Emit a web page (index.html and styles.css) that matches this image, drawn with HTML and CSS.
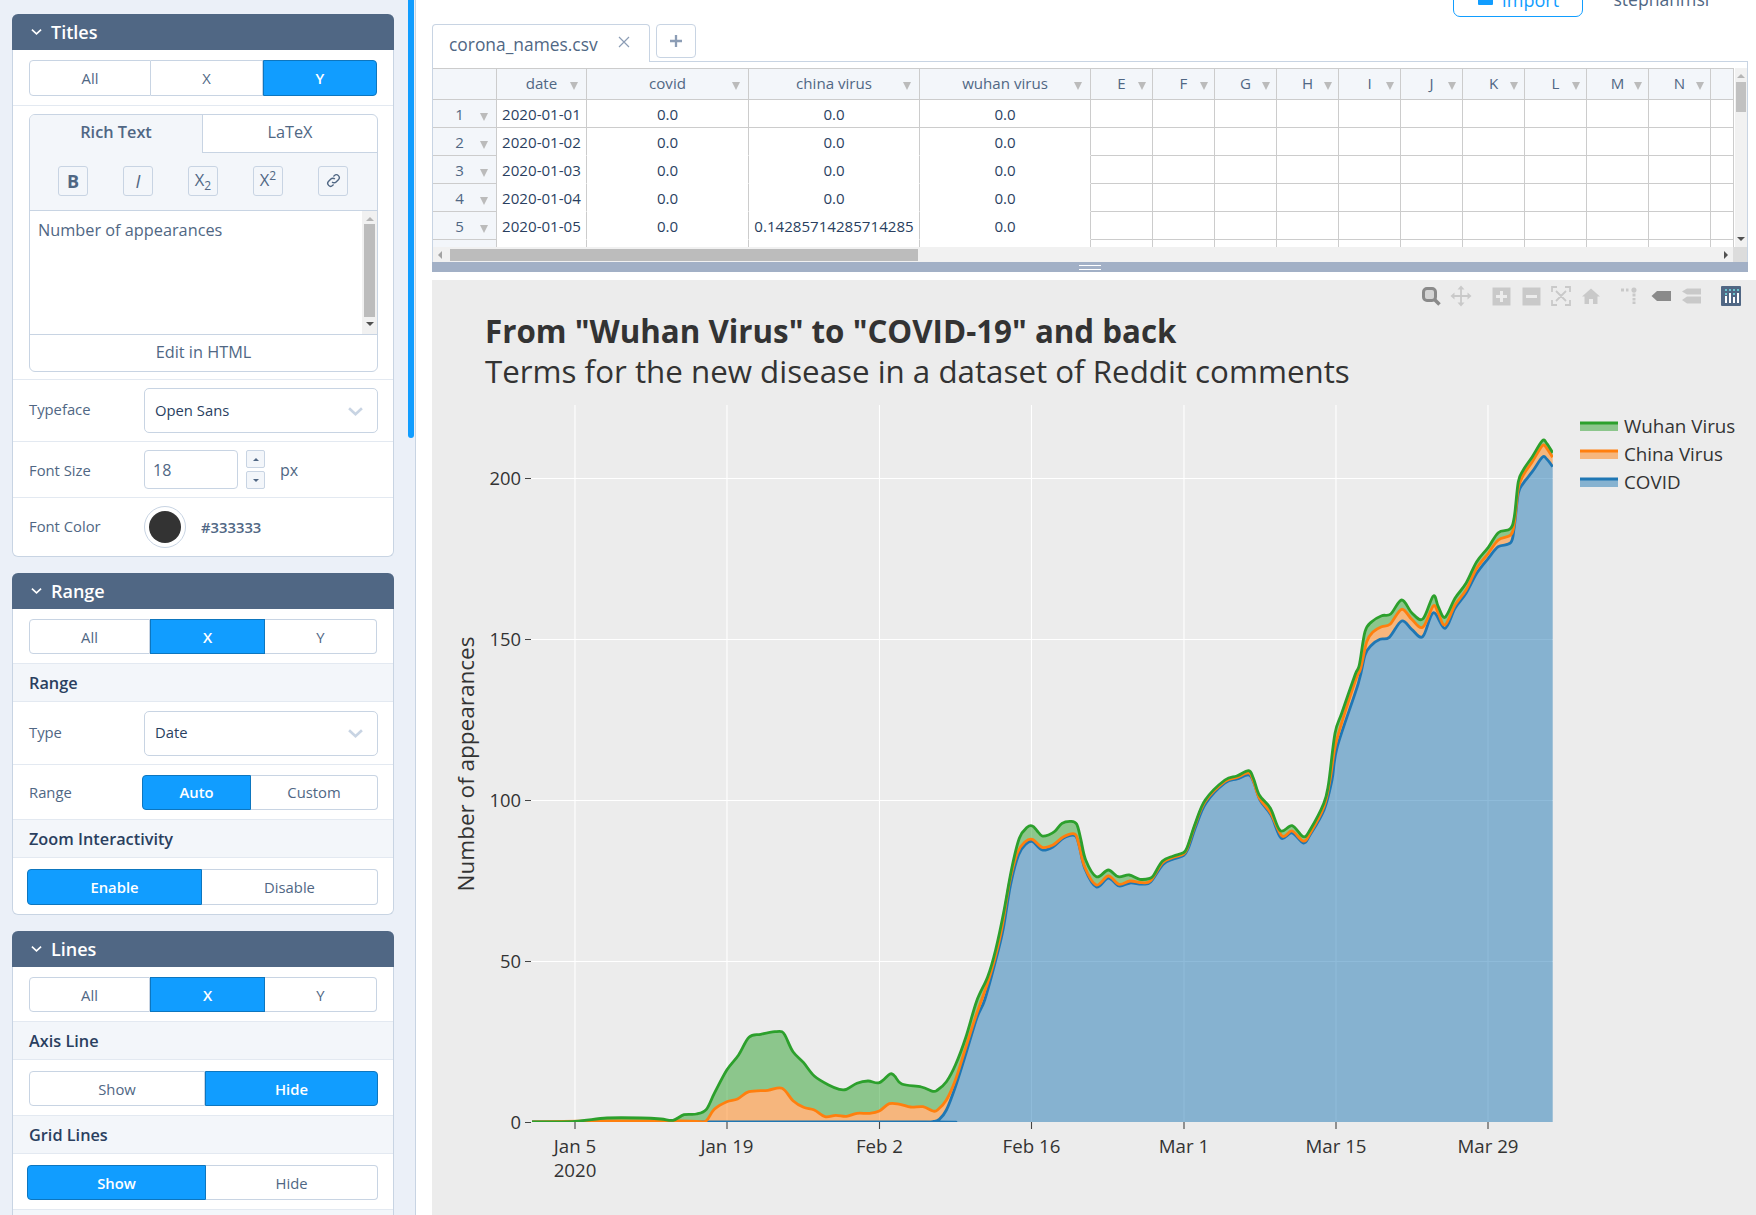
FILE: index.html
```html
<!DOCTYPE html>
<html>
<head>
<meta charset="UTF-8">
<title>Chart Studio</title>
<link rel="stylesheet" href="styles.css">
</head>
<body>
<aside class="sidebar">
  <div class="panels">

    <section class="panel">
      <h2 class="panel-head"><svg class="chev" viewBox="0 0 12 8"><path d="M1 1.5l5 4.500 5-4.500"/></svg>Titles</h2>
      <div class="row row-seg">
        <div class="seg seg-titles">
          <button>All</button><button>X</button><button class="on">Y</button>
        </div>
      </div>
      <div class="row row-editor">
        <div class="editor">
          <div class="ed-tabs">
            <div class="ed-tab ed-tab-on">Rich Text</div>
            <div class="ed-tab">LaTeX</div>
          </div>
          <div class="ed-tools">
            <span class="tool tool-b">B</span>
            <span class="tool tool-i">I</span>
            <span class="tool"><span>X<sub>2</sub></span></span>
            <span class="tool"><span>X<sup>2</sup></span></span>
            <span class="tool"><svg class="link-icon" viewBox="0 0 16 16"><path d="M6.500 9.500a3 3 0 0 0 4.300 0l2.400-2.400a3 3 0 0 0-4.300-4.300l-1 1"/><path d="M9.500 6.500a3 3 0 0 0-4.300 0l-2.400 2.400a3 3 0 0 0 4.300 4.300l1-1"/></svg></span>
          </div>
          <div class="ed-body">
            <div class="ed-text">Number of appearances</div>
            <div class="ed-scroll">
              <i class="arrow-up"></i>
              <div class="ed-thumb"></div>
              <i class="arrow-down"></i>
            </div>
          </div>
          <div class="ed-foot">Edit in HTML</div>
        </div>
      </div>
      <div class="row row-field row-type">
        <label>Typeface</label>
        <div class="select">Open Sans<svg class="sel-chev" viewBox="0 0 14 8"><path d="M1 1l6 5.500 6-5.500"/></svg></div>
      </div>
      <div class="row row-field row-size">
        <label>Font Size</label>
        <div class="num">18</div>
        <div class="spin">
          <span><i class="mini-up"></i></span>
          <span><i class="mini-down"></i></span>
        </div>
        <span class="unit">px</span>
      </div>
      <div class="row row-field row-color">
        <label>Font Color</label>
        <div class="swatch"><span></span></div>
        <span class="hex">#333333</span>
      </div>
    </section>

    <section class="panel">
      <h2 class="panel-head"><svg class="chev" viewBox="0 0 12 8"><path d="M1 1.5l5 4.500 5-4.500"/></svg>Range</h2>
      <div class="row row-seg">
        <div class="seg seg-axis">
          <button>All</button><button class="on">X</button><button>Y</button>
        </div>
      </div>
      <div class="subhead">Range</div>
      <div class="row row-field row-type2">
        <label>Type</label>
        <div class="select">Date<svg class="sel-chev" viewBox="0 0 14 8"><path d="M1 1l6 5.500 6-5.500"/></svg></div>
      </div>
      <div class="row row-field row-range">
        <label>Range</label>
        <div class="seg seg-range">
          <button class="on">Auto</button><button>Custom</button>
        </div>
      </div>
      <div class="subhead">Zoom Interactivity</div>
      <div class="row row-wide row-last">
        <div class="seg seg-zoom">
          <button class="on">Enable</button><button>Disable</button>
        </div>
      </div>
    </section>

    <section class="panel">
      <h2 class="panel-head"><svg class="chev" viewBox="0 0 12 8"><path d="M1 1.5l5 4.500 5-4.500"/></svg>Lines</h2>
      <div class="row row-seg">
        <div class="seg seg-axis">
          <button>All</button><button class="on">X</button><button>Y</button>
        </div>
      </div>
      <div class="subhead">Axis Line</div>
      <div class="row row-wide">
        <div class="seg seg-axisline">
          <button>Show</button><button class="on">Hide</button>
        </div>
      </div>
      <div class="subhead">Grid Lines</div>
      <div class="row row-wide">
        <div class="seg seg-grid">
          <button class="on">Show</button><button>Hide</button>
        </div>
      </div>
      <div class="subhead"></div>
    </section>
  </div>
  <div class="side-thumb"></div>
</aside>

<main class="main">
  <div class="topbar">
    <button class="import"><svg class="import-icon" viewBox="0 0 15 14"><rect width="15" height="14" rx="1"/></svg>Import</button>
    <span class="user">stephanmsr</span>
  </div>

  <div class="file-tabs">
    <div class="file-tab">corona_names.csv<svg class="tab-x" viewBox="0 0 12 12"><path d="M1 1l10 10M11 1L1 11"/></svg></div>
    <div class="file-add"><svg viewBox="0 0 14 14"><path d="M7 1v12M1 7h12"/></svg></div>
  </div>

  <div class="sheet">
    <div class="sheet-top">
      <div class="grid-view">
        <table class="grid">
          <thead>
            <tr>
              <th class="corner"></th><th>date</th><th>covid</th><th>china virus</th><th>wuhan virus</th>
              <th>E</th><th>F</th><th>G</th><th>H</th><th>I</th><th>J</th><th>K</th><th>L</th><th>M</th><th>N</th><th class="corner"></th>
            </tr>
          </thead>
          <tbody>
            <tr><th>1</th><td class="val">2020-01-01</td><td class="val">0.0</td><td class="val">0.0</td><td class="val">0.0</td><td></td><td></td><td></td><td></td><td></td><td></td><td></td><td></td><td></td><td></td><td></td></tr>
            <tr><th>2</th><td class="val">2020-01-02</td><td class="val">0.0</td><td class="val">0.0</td><td class="val">0.0</td><td></td><td></td><td></td><td></td><td></td><td></td><td></td><td></td><td></td><td></td><td></td></tr>
            <tr><th>3</th><td class="val">2020-01-03</td><td class="val">0.0</td><td class="val">0.0</td><td class="val">0.0</td><td></td><td></td><td></td><td></td><td></td><td></td><td></td><td></td><td></td><td></td><td></td></tr>
            <tr><th>4</th><td class="val">2020-01-04</td><td class="val">0.0</td><td class="val">0.0</td><td class="val">0.0</td><td></td><td></td><td></td><td></td><td></td><td></td><td></td><td></td><td></td><td></td><td></td></tr>
            <tr><th>5</th><td class="val">2020-01-05</td><td class="val">0.0</td><td class="val">0.14285714285714285</td><td class="val">0.0</td><td></td><td></td><td></td><td></td><td></td><td></td><td></td><td></td><td></td><td></td><td></td></tr>
            <tr class="cut"><th></th><td class="val"></td><td class="val"></td><td class="val"></td><td class="val"></td><td></td><td></td><td></td><td></td><td></td><td></td><td></td><td></td><td></td><td></td><td></td></tr>
          </tbody>
        </table>
      </div>
      <div class="vscroll">
        <i class="arrow-up"></i>
        <div class="vthumb"></div>
        <i class="arrow-down"></i>
      </div>
    </div>
    <div class="hscroll">
      <i class="arrow-left"></i>
      <div class="hthumb"></div>
      <i class="arrow-right"></i>
      <div class="sc-corner"></div>
    </div>
    <div class="handle"><span></span></div>
  </div>

  <div class="plot">
    <svg class="plot-svg" viewBox="432 280 1324 935">
      <defs>
        <clipPath id="plot-clip"><rect x="531" y="405" width="1022" height="717"/></clipPath>
      </defs>
      <!-- grid -->
      <g class="gridlines">
        <path d="M575 405V1122M727 405V1122M879.500 405V1122M1031.500 405V1122M1184 405V1122M1336 405V1122M1488 405V1122"/>
        <path d="M531 961.500H1553M531 800.500H1553M531 639.500H1553M531 478.500H1553"/>
      </g>
      <g class="ticks">
        <path d="M525 1122.500H531M525 961.500H531M525 800.500H531M525 639.500H531M525 478.500H531"/>
        <path d="M575 1122V1129M727 1122V1129M879.500 1122V1129M1031.500 1122V1129M1184 1122V1129M1336 1122V1129M1488 1122V1129"/>
      </g>
      <!-- traces, chart.js fills in the d -->
      <g clip-path="url(#plot-clip)">
        <path id="fill-blue" class="fill-blue"/>
        <path id="fill-orange" class="fill-orange"/>
        <path id="fill-green" class="fill-green"/>
        <path id="line-blue" class="line line-blue"/>
        <path id="line-orange" class="line line-orange"/>
        <path id="line-green" class="line line-green"/>
      </g>

      <text class="plot-title" x="485" y="343">From "Wuhan Virus" to "COVID-19" and back</text>
      <text class="plot-sub" x="485" y="383">Terms for the new disease in a dataset of Reddit comments</text>
      <text class="y-title" transform="rotate(-90 474 764)" x="474" y="764">Number of appearances</text>

      <g class="y-labels">
        <text x="521" y="1128.500">0</text>
        <text x="521" y="967.500">50</text>
        <text x="521" y="806.500">100</text>
        <text x="521" y="645.500">150</text>
        <text x="521" y="484.500">200</text>
      </g>
      <g class="x-labels">
        <text x="575" y="1153">Jan 5</text>
        <text x="575" y="1177">2020</text>
        <text x="727" y="1153">Jan 19</text>
        <text x="879.500" y="1153">Feb 2</text>
        <text x="1031.500" y="1153">Feb 16</text>
        <text x="1184" y="1153">Mar 1</text>
        <text x="1336" y="1153">Mar 15</text>
        <text x="1488" y="1153">Mar 29</text>
      </g>

      <g class="legend">
        <rect class="fill-green" x="1580" y="423" width="38" height="8"/>
        <path class="line line-green" d="M1580 423H1618"/>
        <text x="1624" y="433">Wuhan Virus</text>
        <rect class="fill-orange" x="1580" y="451" width="38" height="8"/>
        <path class="line line-orange" d="M1580 451H1618"/>
        <text x="1624" y="461">China Virus</text>
        <rect class="fill-blue" x="1580" y="479" width="38" height="8"/>
        <path class="line line-blue" d="M1580 479H1618"/>
        <text x="1624" y="489">COVID</text>
      </g>

      <!-- modebar -->
      <g class="mb-dark">
        <rect class="mb-ring" x="1423.500" y="288.500" width="12" height="12" rx="3.500"/>
        <path class="mb-stroke" d="M1434.500 299.500l5 5"/>
      </g>
      <g class="mb-light">
        <path class="mb-stroke-thin" d="M1461 288V304M1453 296H1469"/>
        <path d="M1461 285.500l3.500 4h-7zM1461 306.500l3.500-4h-7zM1450.500 296l4-3.500v7zM1471.500 296l-4-3.500v7z"/>
        <path fill-rule="evenodd" d="M1492.500 287.500h18v18h-18zM1500 291v4h-4v3h4v4h3v-4h4v-3h-4v-4z"/>
        <path fill-rule="evenodd" d="M1522.500 287.500h18v18h-18zM1526 295v3h11v-3z"/>
        <path class="mb-stroke-thin" d="M1557 287H1552V292M1565 287H1570V292M1557 305H1552V300M1565 305H1570V300M1556 291L1566 301M1566 291L1556 301"/>
        <path d="M1591 288.500l9 8h-2.500v7.500h-4.500v-5h-4v5h-4.500v-7.500h-2.500z"/>
        <path d="M1621 288.500h3v3h-3zM1626 288.500h2.500v3h-2.500zM1634 287.500a2.600 2.600 0 1 1-.1 0zM1632.500 293.500h3v3h-3zM1632.500 298h3v2.500h-3zM1632.500 301.500h3v2.500h-3z"/>
        <path d="M1687 288.500h14v6h-14l-5-3zM1687 296.500h14v7h-14l-5-3.500z"/>
      </g>
      <path class="mb-tag" d="M1657 291h14v10h-14l-5.500-5z"/>
      <rect class="logo-bg" x="1721" y="286" width="20" height="20" rx="1"/>
      <g class="logo-bars">
        <path d="M1725 296h2v7h-2zM1729 293h2v10h-2zM1733 297h2v6h-2zM1737 293h2v10h-2z"/>
      </g>
      <g class="logo-dots">
        <path d="M1725 289h2v2h-2zM1729 289h2v2h-2zM1733 289h2v2h-2zM1737 289h2v2h-2zM1733 293h2v2h-2zM1725 293h2v2h-2z"/>
      </g>
    </svg>
  </div>
</main>
<script src="chart.js"></script>
</body>
</html>
```

FILE: styles.css
```css
* {
  box-sizing: border-box;
}

html, body {
  margin: 0;
  height: 1215px;
  overflow: hidden;
}

body {
  display: flex;
  font-family: "Open Sans", sans-serif;
  font-size: 14.800px;
  color: #506784;
  background: #fff;
}

/* ---- left side ---- */
.sidebar {
  width: 416px;
  height: 1215px;
  flex: none;
  display: flex;
  align-items: flex-start;
  background: #ebf0f8;
  border-right: 1px solid #c8d4e3;
  padding: 14px 0 0 12px;
  overflow: hidden;
}

.panels {
  width: 382px;
  margin-right: 14px;
  flex: none;
}

.side-thumb {
  width: 6px;
  height: 438px;
  margin-top: -14px;
  background: #119dff;
  border-radius: 0 0 3px 3px;
}

.panel {
  background: #fff;
  border: 1px solid #c8d4e3;
  border-top: 0;
  border-radius: 6px;
  margin-bottom: 16px;
}

.panel-head {
  margin: 0 -1px;
  height: 36px;
  display: flex;
  align-items: center;
  background: #506784;
  color: #fff;
  font-size: 18px;
  font-weight: 600;
  border-radius: 6px 6px 0 0;
}

.chev {
  width: 11px;
  height: 8px;
  margin: 0 9px 0 19px;
  fill: none;
  stroke: #fff;
  stroke-width: 1.800;
}

.row {
  border-bottom: 1px solid #e3e9f1;
  padding: 0 15px 0 16px;
}

.row-seg {
  height: 55px;
  padding-top: 10px;
}

.panel:first-child .row-seg {
  height: 56px;
}

.seg {
  display: grid;
  height: 35px;
}

.seg button {
  font: inherit;
  color: #506784;
  background: #fff;
  border: 1px solid #c8d4e3;
  border-left: 0;
  padding: 0;
}

.seg button:first-child {
  border-left: 1px solid #c8d4e3;
  border-radius: 4px 0 0 4px;
}

.seg button:last-child {
  border-radius: 0 4px 4px 0;
}

.seg button.on {
  background: #119dff;
  border: 1px solid #0d76bf;
  color: #fff;
  font-weight: 600;
}

.seg-titles {
  grid-template-columns: 122px 112px 114px;
  height: 36px;
}

.seg-axis {
  grid-template-columns: 121px 115px 112px;
}

.seg-range {
  grid-template-columns: 109px 127px;
}

.seg-zoom {
  grid-template-columns: 175px 176px;
  margin-left: -2px;
  height: 36px;
}

.seg-axisline {
  grid-template-columns: 176px 173px;
}

.seg-grid {
  grid-template-columns: 179px 172px;
  margin-left: -2px;
}

.row-editor {
  height: 274px;
  padding-top: 8px;
}

.editor {
  height: 258px;
  border: 1px solid #c8d4e3;
  border-radius: 6px;
  overflow: hidden;
  display: flex;
  flex-direction: column;
}

.ed-tabs {
  display: flex;
  height: 38px;
  flex: none;
}

.ed-tab {
  flex: 1;
  display: flex;
  align-items: center;
  justify-content: center;
  padding-bottom: 3px;
  border-bottom: 1px solid #c8d4e3;
  font-size: 16.300px;
}

.ed-tab-on {
  flex: 0 0 173px;
  padding-bottom: 5px;
  background: #f3f6fa;
  border-bottom: 0;
  border-right: 1px solid #c8d4e3;
  font-weight: 600;
}

.ed-tools {
  height: 58px;
  flex: none;
  display: flex;
  align-items: center;
  gap: 35px;
  padding: 0 0 2px 28px;
  background: #f3f6fa;
  border-bottom: 1px solid #c8d4e3;
}

.tool {
  width: 30px;
  height: 30px;
  display: flex;
  align-items: center;
  justify-content: center;
  border: 1px solid #c8d4e3;
  border-radius: 3px;
  font-size: 16.500px;
  line-height: 1;
}

.tool sub, .tool sup {
  font-size: 12px;
  line-height: 0;
}

.tool-b {
  font-weight: 700;
  font-size: 18px;
}

.tool-i {
  font-style: italic;
  font-size: 18px;
}

.link-icon {
  width: 15px;
  height: 15px;
  fill: none;
  stroke: #506784;
  stroke-width: 1.500;
}

.ed-body {
  height: 124px;
  flex: none;
  display: flex;
  border-bottom: 1px solid #c8d4e3;
}

.ed-text {
  flex: 1;
  padding: 9px 8px;
  font-size: 16.300px;
  line-height: 21px;
}

.ed-scroll {
  width: 15px;
  background: #f1f1f1;
  display: flex;
  flex-direction: column;
  align-items: center;
}

.ed-scroll .arrow-up {
  margin: 6px 0 3px;
}

.ed-thumb {
  width: 11px;
  height: 93px;
  background: #bcbcbc;
}

.ed-scroll .arrow-down {
  margin-top: 5px;
}

.ed-foot {
  flex: 1;
  display: flex;
  align-items: center;
  justify-content: center;
  padding-bottom: 2px;
  font-size: 16.300px;
}

.arrow-up, .arrow-down, .arrow-left, .arrow-right {
  display: block;
  width: 0;
  height: 0;
  flex: none;
  border-style: solid;
  border-color: transparent;
}

.arrow-up {
  border-width: 0 4px 4px;
  border-bottom-color: #b5b5b5;
}

.arrow-down {
  border-width: 4px 4px 0;
  border-top-color: #505050;
}

.arrow-left {
  border-width: 4px 4px 4px 0;
  border-right-color: #a3a3a3;
}

.arrow-right {
  border-width: 4px 0 4px 4px;
  border-left-color: #505050;
}

.row-field {
  display: flex;
  align-items: center;
}

.row-field label {
  width: 115px;
  flex: none;
}

.row-type {
  height: 62px;
}

.row-type2 {
  height: 63px;
}

.row-type label, .row-type2 label {
  margin-top: -3px;
}

.select {
  width: 234px;
  height: 45px;
  display: flex;
  align-items: center;
  justify-content: space-between;
  padding: 0 14px 2px 10px;
  border: 1px solid #c8d4e3;
  border-radius: 5px;
  color: #2a3f5f;
}

.sel-chev {
  width: 15px;
  height: 9px;
  margin-top: 3px;
  fill: none;
  stroke: #c8d4e3;
  stroke-width: 2.500;
}

.row-size {
  height: 56px;
}

.num {
  width: 94px;
  height: 39px;
  display: flex;
  align-items: center;
  padding-left: 8px;
  border: 1px solid #c8d4e3;
  border-radius: 4px;
  font-size: 16px;
}

.spin {
  display: flex;
  flex-direction: column;
  gap: 3px;
  margin: 0 15px 0 8px;
}

.spin span {
  width: 19px;
  height: 18px;
  display: flex;
  align-items: center;
  justify-content: center;
  background: #f3f6fa;
  border: 1px solid #c8d4e3;
  border-radius: 2px;
}

.mini-up, .mini-down {
  width: 0;
  height: 0;
  border-style: solid;
  border-color: transparent;
}

.mini-up {
  border-width: 0 3.500px 3.500px;
  border-bottom-color: #506784;
}

.mini-down {
  border-width: 3.500px 3.500px 0;
  border-top-color: #506784;
}

.unit {
  font-size: 16px;
}

.row-color {
  height: 58px;
  border-bottom: 0;
}

.row-color label {
  margin-top: -2px;
}

.swatch {
  width: 42px;
  height: 42px;
  display: flex;
  align-items: center;
  justify-content: center;
  border: 1px solid #c8d4e3;
  border-radius: 50%;
}

.swatch span {
  width: 32px;
  height: 32px;
  border-radius: 50%;
  background: #333;
}

.hex {
  margin-left: 15px;
  font-weight: 600;
}

.subhead {
  height: 38px;
  display: flex;
  align-items: center;
  padding: 1px 16px 0;
  background: #f3f6fa;
  border-bottom: 1px solid #e3e9f1;
  color: #2a3f5f;
  font-size: 16.300px;
  font-weight: 600;
}

.row-range {
  height: 55px;
}

.row-range label {
  width: 113px;
}

.row-wide {
  height: 56px;
  padding-top: 11px;
}

.row-last {
  border-bottom: 0;
}

/* ---- right side ---- */
.main {
  flex: 1;
  min-width: 0;
  display: flex;
  flex-direction: column;
  padding-left: 16px;
}

.topbar {
  height: 17px;
  flex: none;
  display: flex;
  justify-content: flex-end;
  align-items: flex-end;
  gap: 30px;
  padding-right: 44px;
  overflow: hidden;
}

.import {
  width: 130px;
  height: 50px;
  flex: none;
  display: flex;
  justify-content: center;
  align-items: flex-end;
  gap: 9px;
  padding: 0 0 7px;
  font: inherit;
  font-size: 18px;
  line-height: 18px;
  color: #119dff;
  background: #fff;
  border: 1.500px solid #119dff;
  border-radius: 7px;
}

.import-icon {
  width: 15px;
  height: 14px;
  margin-bottom: 4px;
  fill: #119dff;
}

.user {
  font-size: 17.600px;
  line-height: 18px;
  margin-bottom: 9px;
}

.file-tabs {
  height: 45px;
  flex: none;
  display: flex;
  align-items: flex-start;
  gap: 6px;
  padding-top: 7px;
  margin-right: 8px;
  border-bottom: 1px solid #c8d4e3;
}

.file-tab {
  width: 218px;
  height: 38px;
  display: flex;
  align-items: center;
  padding: 1px 0 0 16px;
  background: #fff;
  border: 1px solid #c8d4e3;
  border-bottom: 0;
  border-radius: 4px 4px 0 0;
  font-size: 17.400px;
  white-space: nowrap;
}

.tab-x {
  width: 12px;
  height: 12px;
  margin: -4px 0 0 20px;
  fill: none;
  stroke: #8c9db5;
  stroke-width: 1.200;
}

.file-add {
  width: 40px;
  height: 34px;
  display: flex;
  align-items: center;
  justify-content: center;
  border: 1px solid #c8d4e3;
  border-radius: 4px;
}

.file-add svg {
  width: 14px;
  height: 14px;
  fill: none;
  stroke: #8c9db5;
  stroke-width: 2.300;
}

.sheet {
  height: 210px;
  flex: none;
  margin-right: 8px;
  border-left: 1px solid #c8d4e3;
  border-right: 1px solid #c8d4e3;
  padding-top: 6px;
  display: flex;
  flex-direction: column;
}

.sheet-top {
  height: 179px;
  flex: none;
  display: flex;
}

.grid-view {
  width: 1301px;
  flex: none;
  overflow: hidden;
}

.grid {
  width: 1301px;
  table-layout: fixed;
  border-collapse: separate;
  border-spacing: 0;
  font-size: 15.100px;
}

.grid th, .grid td {
  padding: 0;
  font-weight: 400;
  text-align: center;
  border-right: 1px solid #ccc;
  border-bottom: 1px solid #ccc;
  position: relative;
  white-space: nowrap;
}

.grid thead th {
  height: 32px;
  width: 62px;
  padding-bottom: 2px;
  background: #f3f6fa;
  border-top: 1px solid #ccc;
}

.grid thead th:nth-child(1) { width: 64px; }
.grid thead th:nth-child(2) { width: 90px; }
.grid thead th:nth-child(3) { width: 162px; }
.grid thead th:nth-child(4) { width: 171px; }
.grid thead th:nth-child(5) { width: 171px; }
.grid thead th:nth-child(16) { width: 23px; }

.grid tbody tr {
  height: 28px;
}

.grid tbody th, .grid tbody td.val {
  padding-top: 1px;
}

.grid tbody th {
  background: #f3f6fa;
  padding-right: 10px;
}

.grid tbody td {
  color: #2a3f5f;
}

.grid thead th:not(.corner)::after, .grid tbody tr:not(.cut) th::after {
  content: "";
  position: absolute;
  right: 8px;
  top: 13px;
  border-style: solid;
  border-width: 8px 4px 0;
  border-color: #bbb transparent transparent;
}

.grid tbody th::after {
  top: 13px !important;
}

.grid thead th:nth-child(n+6)::after {
  right: 6px;
}

.grid tbody tr:not(:first-child) td.val {
  border-bottom-color: transparent;
}

.vscroll {
  width: 13px;
  margin-left: 1px;
  background: #f1f1f1;
  display: flex;
  flex-direction: column;
  align-items: center;
}

.vscroll .arrow-up {
  margin: 6px 0 4px;
}

.vthumb {
  width: 10px;
  height: 30px;
  background: #c1c1c1;
}

.vscroll .arrow-down {
  margin-top: auto;
  margin-bottom: 6px;
}

.hscroll {
  height: 15px;
  flex: none;
  display: flex;
  align-items: center;
  background: #f1f1f1;
  padding-left: 5px;
}

.hscroll .arrow-left {
  margin-right: 8px;
}

.hthumb {
  width: 468px;
  height: 12px;
  background: #bcbcbc;
}

.hscroll .arrow-right {
  margin-left: auto;
  margin-right: 5px;
}

.sc-corner {
  width: 14px;
  height: 15px;
  background: #dcdcdc;
}

.handle {
  height: 10px;
  flex: none;
  margin: 0 -1px;
  display: flex;
  align-items: center;
  justify-content: center;
  background: #a2b0c6;
}

.handle span {
  width: 22px;
  height: 5px;
  border-top: 1px solid #fff;
  border-bottom: 1px solid #fff;
}

.plot {
  margin-top: 8px;
  flex: 1;
  background: #ececec;
}

.plot-svg {
  display: block;
  width: 1324px;
  height: 935px;
}

.plot-svg text {
  font-family: "Open Sans", sans-serif;
  fill: #333;
}

.gridlines path {
  fill: none;
  stroke: #fff;
  stroke-width: 1.100;
}

.ticks path {
  fill: none;
  stroke: #444;
  stroke-width: 1.100;
}

.fill-blue { fill: rgba(31, 119, 180, .5); }
.fill-orange { fill: rgba(255, 127, 14, .5); }
.fill-green { fill: rgba(44, 160, 44, .5); }

.line {
  fill: none;
  stroke-width: 2.800;
  stroke-linejoin: round;
}

.line-blue { stroke: #1f77b4; }
.line-orange { stroke: #ff7f0e; }
.line-green { stroke: #2ca02c; }

.plot-svg .plot-title {
  font-size: 31.300px;
  font-weight: 700;
}

.plot-svg .plot-sub {
  font-size: 31.300px;
}

.plot-svg .y-title {
  font-size: 22.500px;
  text-anchor: middle;
}

.y-labels text {
  font-size: 18.400px;
  text-anchor: end;
}

.x-labels text {
  font-size: 18.700px;
  text-anchor: middle;
}

.legend text {
  font-size: 18.800px;
}

.mb-dark .mb-ring {
  fill: #d4d4d4;
  stroke: #8a8a8a;
  stroke-width: 3;
}

.mb-stroke {
  fill: none;
  stroke: #8a8a8a;
  stroke-width: 3.500;
}

.mb-light {
  fill: #c9c9c9;
}

.mb-stroke-thin {
  fill: none;
  stroke: #c9c9c9;
  stroke-width: 1.800;
}

.mb-tag {
  fill: #8a8a8a;
}

.logo-bg {
  fill: #506784;
}

.logo-bars {
  fill: #fff;
}

.logo-dots {
  fill: #69c5ce;
}
```

FILE: chart.js
```js
// stacked traces, in page pixels (the svg viewBox is the page)
var green = [[532,1122],[575,1121.3],[607,1118],[641,1118],[661,1119],[673,1120.3],[684,1114.7],[696.4,1114],[706.4,1109.3],[714.3,1093.3],[726.8,1070],[738.6,1055],[749,1037.3],[760.7,1034.3],[775,1031.7],[782,1031.7],[785.7,1036.7],[793,1051.7],[803.6,1062.7],[814.3,1076],[828.6,1085],[839.3,1089.3],[846.4,1089.3],[857,1083.3],[868,1081],[879.3,1082.7],[890,1074],[894.6,1076],[901.8,1084],[921.4,1087],[932.9,1091.3],[937.5,1090],[946.4,1081.7],[955.4,1065],[966,1036.7],[976.7,1001],[987.7,976.7],[995.6,950],[1003.5,913.3],[1011.4,870],[1019.3,838.3],[1027.2,827.3],[1032.4,826],[1037,830.7],[1042.2,836],[1049,834.7],[1054.9,831.3],[1062,823.3],[1070.7,821.3],[1076.6,824],[1080.6,838.3],[1085.7,860],[1096.4,876.7],[1108.3,870],[1118.2,876.7],[1129.2,875],[1139.9,879.3],[1149.8,878.3],[1153.8,875],[1162.5,861],[1173.5,856],[1183.4,852.7],[1187.4,846.7],[1195.3,823.3],[1205.2,800],[1224.9,780],[1236.8,776],[1248.7,770.7],[1253.4,778.3],[1259.3,795],[1270.4,808.3],[1280.3,830.7],[1292.1,825.7],[1303.2,836.7],[1310,830],[1323.8,803.3],[1328.5,784],[1335,733.3],[1341.7,713.3],[1355,675],[1359.3,665],[1365,631.7],[1371.7,621.7],[1381.7,615.7],[1390.7,614],[1401.7,600],[1411.7,612.7],[1422.7,619],[1433.3,596],[1438.3,606.7],[1445,617.3],[1455,598.3],[1466,583.3],[1476.7,561.7],[1488.3,547.3],[1498.3,532.7],[1510,529],[1514.3,516.7],[1518.3,481.7],[1523.3,470],[1532.3,456.7],[1542.3,440.7],[1546.7,443.3],[1552.7,452.7]];

var orange = [[532,1122],[600,1121],[680,1121],[700,1121.6],[706.4,1120.7],[714.3,1109.3],[726.8,1101.7],[737.5,1099],[749,1091.7],[767.9,1090.3],[782,1088.3],[793,1100.7],[803.6,1107.3],[814.3,1110],[825,1116.7],[835.7,1115.3],[846.4,1116.3],[857,1113.3],[869.6,1113.3],[879.3,1111],[889.3,1103.7],[900,1104.3],[910.7,1107],[923,1106.7],[932.9,1111],[937.5,1110],[946.4,1100],[955.4,1080],[966,1046.7],[976.8,1013.3],[987.5,983.3],[993.6,963],[1001.5,930],[1009.4,883],[1017.3,853],[1025.2,841.7],[1032.4,839.3],[1042.2,847.3],[1052.9,845],[1063.6,836.7],[1074.7,834],[1078.6,843.3],[1084.6,866.7],[1096.4,885],[1108.3,876],[1119,884.3],[1130,881],[1141.9,882.7],[1150.6,880.7],[1162.5,862.7],[1173.5,857.3],[1183.4,854],[1187.4,848],[1195.3,824.5],[1205.2,801.5],[1224.9,781.5],[1236.8,777.5],[1248.7,773],[1253.4,781],[1259.3,798],[1270.4,812.5],[1282,836],[1292.1,831],[1303.2,841],[1310,833.5],[1323.8,807],[1330,780],[1336.7,740],[1355,681.7],[1360.7,668.3],[1366.7,641.7],[1373.3,631.7],[1381.7,626.7],[1390,624.3],[1401.7,609.3],[1411.7,619.3],[1422.7,627.3],[1433.3,606],[1438.3,613.3],[1445,625],[1455,605],[1466,590],[1476.7,568.3],[1488.3,553.3],[1498.3,540],[1510.7,535],[1514.3,523.3],[1518.3,488.3],[1523.3,475],[1532.3,461.7],[1542.3,445.7],[1546.7,448.3],[1552.7,457.3]];

var blue = [[532,1122],[925,1122],[932,1121.8],[939.3,1119.3],[946.4,1110],[955.4,1086.7],[966,1053.3],[976.8,1018],[984.7,1000],[995,963],[1003,930],[1010.5,885],[1018.5,855],[1026,844],[1032.4,841.5],[1042.2,850],[1052.9,847],[1063.6,838],[1074.7,835.5],[1079,845],[1085,869],[1096.4,887],[1108.3,878],[1119,886],[1130,883],[1141.9,884],[1150.6,882],[1163,864.5],[1173.5,859],[1183.4,855.5],[1188,849],[1196,826],[1206,803],[1225,783],[1237,779],[1248.7,775],[1254,783],[1260,800],[1271,815],[1281,838],[1292,833],[1303.5,843],[1310,835],[1324,810],[1332,780],[1337.3,746.7],[1358.3,683.3],[1365,655],[1371.7,645],[1380,639.3],[1389.3,637.3],[1401.7,621],[1411.7,629.3],[1422.7,636.7],[1433.3,612.7],[1445,628.3],[1455,608.3],[1466,593.3],[1476.7,573.3],[1488.3,558.3],[1498.3,546.7],[1510.7,542.7],[1514.3,526.7],[1518.3,493.3],[1523.3,483.3],[1532.3,471.7],[1542.3,457.3],[1546.7,459],[1552.7,466.7]];

// catmull-rom through the points, same look as plotly's spline lines
function spline(pts, move) {
  var d = (move ? "M" : "L") + pts[0][0] + " " + pts[0][1];
  for (var i = 0; i < pts.length - 1; i++) {
    var p0 = pts[Math.max(i - 1, 0)];
    var p1 = pts[i];
    var p2 = pts[i + 1];
    var p3 = pts[Math.min(i + 2, pts.length - 1)];
    var c1x = p1[0] + (p2[0] - p0[0]) / 6;
    var c1y = p1[1] + (p2[1] - p0[1]) / 6;
    var c2x = p2[0] - (p3[0] - p1[0]) / 6;
    var c2y = p2[1] - (p3[1] - p1[1]) / 6;
    d += "C" + c1x.toFixed(1) + " " + c1y.toFixed(1) + " " + c2x.toFixed(1) + " " + c2y.toFixed(1) + " " + p2[0] + " " + p2[1];
  }
  return d;
}

function between(top, bottom) {
  return spline(top, true) + spline(bottom.slice().reverse(), false) + "Z";
}

var base = [[532,1122],[1552.7,1122]];

document.getElementById("line-blue").setAttribute("d", spline(blue, true));
document.getElementById("line-orange").setAttribute("d", spline(orange, true));
document.getElementById("line-green").setAttribute("d", spline(green, true));
document.getElementById("fill-blue").setAttribute("d", between(blue, base));
document.getElementById("fill-orange").setAttribute("d", between(orange, blue));
document.getElementById("fill-green").setAttribute("d", between(green, orange));
```
